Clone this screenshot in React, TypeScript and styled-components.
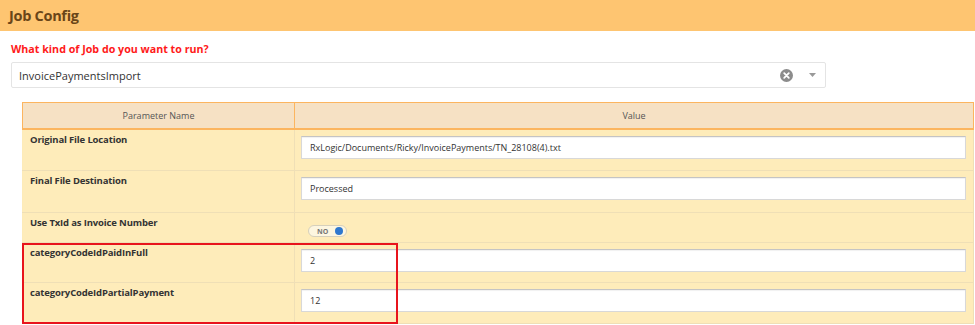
import React from "react";
import styled, { createGlobalStyle } from "styled-components";

const Global = createGlobalStyle`
  html, body { margin: 0; padding: 0; background: #ffffff; }
  body { font-family: "Open Sans", "Liberation Sans", sans-serif; color: #333; }
  * { box-sizing: border-box; }
`;

const Page = styled.div`
  width: 975px;
  height: 325px;
  overflow: hidden;
  background: #fff;
`;

const TitleBar = styled.div`
  height: 31px;
  background: #fec571;
  display: flex;
  align-items: center;
  padding-left: 9px;
  font-size: 14.5px;
  letter-spacing: -0.3px;
  font-weight: 700;
  color: #6a4618;
`;

const Body = styled.div`
  padding: 10px 0 0 11px;
`;

const Question = styled.div`
  font-size: 10.7px;
  font-weight: 700;
  color: #ff1a1a;
  line-height: 16px;
  height: 21px;
`;

const Select = styled.div`
  width: 815px;
  height: 26px;
  border: 1px solid #e4e4e4;
  border-radius: 2px;
  display: flex;
  align-items: center;
  padding-left: 7px;
  font-size: 11px;
  color: #333;
`;

const SelectValue = styled.span`
  flex: 1;
`;

const SelectIcons = styled.div`
  display: flex;
  align-items: center;
  gap: 16px;
  padding-right: 9px;
`;

const TableWrap = styled.div`
  position: relative;
  margin: 14px 0 0 22px;
  width: 952px;
`;

const Table = styled.table`
  width: 100%;
  border-collapse: collapse;
  table-layout: fixed;
  font-size: 9.5px;
`;

const HeadCell = styled.th`
  height: 26px;
  background: #f6e1c4;
  border: 1px solid #fcb55f;
  border-bottom-width: 2px;
  font-weight: 400;
  color: #555;
  font-size: 9px;
  text-align: center;
  padding: 0;
`;

const Row = styled.tr<{ $h: number }>`
  height: ${(p) => p.$h}px;
  background: #feecba;
`;

const NameCell = styled.td`
  vertical-align: top;
  padding: 3px 0 0 7px;
  font-weight: 700;
  font-size: 9.5px;
  letter-spacing: -0.15px;
  color: #333;
  border: 1px solid #efdfb6;
  border-left: 1px solid #fdebb9;
`;

const ValueCell = styled.td`
  vertical-align: top;
  padding: 6px 7px 0 6px;
  border: 1px solid #efdfb6;
`;

const Input = styled.div`
  height: 23px;
  background: #fff;
  border: 1px solid #d8d8d8;
  border-top-color: #c4c4c4;
  box-shadow: inset 0 1px 1px rgba(0, 0, 0, 0.06);
  display: flex;
  align-items: center;
  padding-left: 8px;
  font-size: 9px;
  color: #333;
`;

const Toggle = styled.div`
  width: 39px;
  height: 12px;
  margin: 6px 0 0 7px;
  border: 1px solid #d6d0bc;
  border-radius: 7px;
  background: #fdf6e0;
  display: flex;
  align-items: center;
  justify-content: space-between;
  padding: 0 3px 0 8px;
  font-size: 7px;
  font-weight: 700;
  color: #777;
`;

const Dot = styled.span`
  width: 8px;
  height: 8px;
  border-radius: 50%;
  background: #2f78cf;
`;

const Highlight = styled.div`
  position: absolute;
  left: 0;
  top: 141px;
  width: 376px;
  height: 81px;
  border: 2px solid #e8141c;
`;

type Param = { name: string; h: number; value?: string; toggle?: boolean };

const params: Param[] = [
  { name: "Original File Location", h: 42, value: "RxLogic/Documents/Ricky/InvoicePayments/TN_28108(4).txt" },
  { name: "Final File Destination", h: 42, value: "Processed" },
  { name: "Use TxId as Invoice Number", h: 30, toggle: true },
  { name: "categoryCodeIdPaidInFull", h: 40, value: "2" },
  { name: "categoryCodeIdPartialPayment", h: 41, value: "12" },
];

export default function App() {
  return (
    <Page>
      <Global />
      <TitleBar>Job Config</TitleBar>
      <Body>
        <Question>What kind of Job do you want to run?</Question>
        <Select>
          <SelectValue>InvoicePaymentsImport</SelectValue>
          <SelectIcons>
            <svg width="13" height="13" viewBox="0 0 13 13">
              <circle cx="6.5" cy="6.5" r="6.5" fill="#8c8c8c" />
              <path d="M4.2 4.2 L8.8 8.8 M8.8 4.2 L4.2 8.8" stroke="#fff" strokeWidth="1.8" strokeLinecap="round" />
            </svg>
            <svg width="7" height="4" viewBox="0 0 7 4">
              <path d="M0 0 H7 L3.5 4 Z" fill="#999" />
            </svg>
          </SelectIcons>
        </Select>
      </Body>
      <TableWrap>
        <Table>
          <colgroup>
            <col style={{ width: 272 }} />
            <col />
          </colgroup>
          <thead>
            <tr>
              <HeadCell>Parameter Name</HeadCell>
              <HeadCell>Value</HeadCell>
            </tr>
          </thead>
          <tbody>
            {params.map((p) => (
              <Row key={p.name} $h={p.h}>
                <NameCell>{p.name}</NameCell>
                <ValueCell>
                  {p.toggle ? (
                    <Toggle>
                      NO
                      <Dot />
                    </Toggle>
                  ) : (
                    <Input>{p.value}</Input>
                  )}
                </ValueCell>
              </Row>
            ))}
          </tbody>
        </Table>
        <Highlight />
      </TableWrap>
    </Page>
  );
}
